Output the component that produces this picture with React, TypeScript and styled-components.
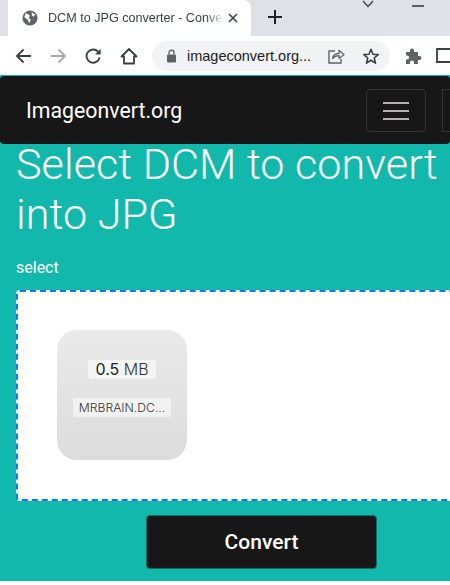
import React from 'react';
import styled, { createGlobalStyle } from 'styled-components';

const GlobalStyle = createGlobalStyle`
  html, body { margin: 0; padding: 0; background: #fff; }
  body { width: 450px; height: 585px; overflow: hidden; font-family: Roboto, "Liberation Sans", sans-serif; }
`;

const Page = styled.div`
  width: 450px;
  height: 585px;
  overflow: hidden;
  display: flex;
  flex-direction: column;
`;

const TabStrip = styled.div`
  height: 36px;
  flex: none;
  background: #dee1e6;
  display: flex;
  padding-left: 8px;
  position: relative;
`;

const Tab = styled.div`
  width: 243px;
  background: #fff;
  border-radius: 0 8px 0 0;
  display: flex;
  align-items: center;
  padding-left: 14px;
  box-sizing: border-box;
  gap: 10px;
  position: relative;
`;

const TabTitle = styled.div`
  font: 400 12.6px "Liberation Sans", Arial, sans-serif;
  color: #3c4043;
  white-space: nowrap;
  width: 176px;
  -webkit-mask-image: linear-gradient(to right, #000 90%, transparent);
  mask-image: linear-gradient(to right, #000 90%, transparent);
`;

const TabClose = styled.svg`
  position: absolute;
  right: 13px;
  top: 13px;
`;

const NewTab = styled.svg`
  margin: 10px 0 0 17px;
`;

const WindowButtons = styled.div`
  position: absolute;
  left: 362px;
  top: 0;
  display: flex;
  gap: 38px;
`;

const Toolbar = styled.div`
  height: 39px;
  flex: none;
  background: #fff;
  display: flex;
  align-items: center;
  padding-left: 15px;
  position: relative;
`;

const NavIcons = styled.div`
  display: flex;
  gap: 18px;
  align-items: center;
`;

const Omnibox = styled.div`
  margin-left: 14px;
  width: 238px;
  height: 30px;
  flex: none;
  border-radius: 15px;
  background: #f1f3f4;
  display: flex;
  align-items: center;
  padding-left: 14px;
  box-sizing: border-box;
  position: relative;
`;

const Url = styled.div`
  margin-left: 10px;
  font: 400 14.5px "Liberation Sans", Arial, sans-serif;
  color: #202124;
  white-space: nowrap;
`;

const OmniIcons = styled.div`
  position: absolute;
  right: 10px;
  top: 6px;
  display: flex;
  gap: 17px;
`;

const Extensions = styled.div`
  display: flex;
  gap: 14px;
  margin-left: 15px;
  flex: none;
`;

const Body = styled.div`
  flex: 1;
  background: #11b8ab;
  display: flex;
  flex-direction: column;
  min-height: 0;
`;

const Navbar = styled.div`
  height: 68px;
  flex: none;
  margin-top: 1px;
  background: #171717;
  border-radius: 4px;
  display: flex;
  align-items: center;
  padding-left: 26px;
  position: relative;
`;

const Brand = styled.div`
  color: #fff;
  font-size: 21.3px;
  font-weight: 400;
`;

const Toggler = styled.div`
  position: absolute;
  left: 366px;
  top: 13px;
  width: 60px;
  height: 43px;
  border: 1px solid #333;
  border-radius: 4px;
  box-sizing: border-box;
  display: flex;
  flex-direction: column;
  align-items: center;
  justify-content: center;
  gap: 6px;
`;

const TogglerLine = styled.span`
  display: block;
  width: 26px;
  height: 2px;
  background: #b5b1b1;
`;

const NavEdge = styled.div`
  position: absolute;
  left: 442px;
  top: 13px;
  width: 8px;
  height: 43px;
  border: 1px solid #333;
  border-right: none;
  box-sizing: border-box;
`;

const Heading = styled.h1`
  margin: -4px 0 0 16px;
  font-size: 43.2px;
  line-height: 50px;
  font-weight: 300;
  color: #fff;
  white-space: nowrap;
`;

const SelectLabel = styled.div`
  margin: 18px 0 0 16px;
  font-size: 16px;
  line-height: 20px;
  font-weight: 400;
  color: #fff;
`;

const DropZone = styled.div`
  margin: 12px 0 0 16px;
  width: 450px;
  height: 211px;
  flex: none;
  background: #fff;
  border: 2px dashed #0d7bf2;
  border-radius: 4px;
  box-sizing: border-box;
  padding: 38px 0 0 39px;
`;

const FileCard = styled.div`
  width: 130px;
  height: 130px;
  border-radius: 20px;
  background: linear-gradient(to bottom, #eaeaea, #dcdcdd);
  display: flex;
  flex-direction: column;
  align-items: center;
  padding-top: 30px;
  box-sizing: border-box;
`;

const FileSize = styled.div`
  background: rgba(255, 255, 255, 0.55);
  border-radius: 2px;
  padding: 0 7px;
  height: 19px;
  line-height: 19px;
  font-size: 16px;
  color: #333;
  font-family: Inter, Roboto, sans-serif;
  font-weight: 300;
  & strong { font-weight: 400; color: #222; }
`;

const FileName = styled.div`
  margin-top: 19px;
  background: rgba(255, 255, 255, 0.55);
  border-radius: 2px;
  padding: 0 6px;
  height: 19px;
  line-height: 19px;
  font-size: 12.2px;
  color: #333;
  font-family: Inter, Roboto, sans-serif;
  font-weight: 300;
  white-space: nowrap;
`;

const ConvertButton = styled.button`
  display: block;
  margin: 14px 0 0 146px;
  width: 231px;
  height: 54px;
  flex: none;
  background: #171717;
  color: #fff;
  border: 1px solid #0f6e66;
  border-radius: 4px;
  font: 500 21px Roboto, sans-serif;
  padding: 0;
`;

const BottomStrip = styled.div`
  height: 4px;
  flex: none;
  background: #fff;
`;

const Spacer = styled.div`
  flex: 1;
`;

export default function App() {
  return (
    <Page>
      <GlobalStyle />
      <TabStrip>
        <Tab>
          <svg width="16" height="16" viewBox="0 0 18 18">
            <circle cx="9" cy="9" r="8.5" fill="#5f6368" />
            <path d="M4.5 3.5 9 6.5 7.5 9 10 11 8 15 6.5 11 2.5 8zM11 2.5 15 5 13 7.5 11 6z" fill="#fff" />
          </svg>
          <TabTitle>DCM to JPG converter - Conve</TabTitle>
          <TabClose width="10" height="10" viewBox="0 0 10 10">
            <path d="M1 1 9 9M9 1 1 9" stroke="#3c4043" strokeWidth="1.6" />
          </TabClose>
        </Tab>
        <NewTab width="14" height="14" viewBox="0 0 14 14">
          <path d="M7 0V14M0 7H14" stroke="#202124" strokeWidth="2" />
        </NewTab>
        <WindowButtons>
          <svg width="12" height="8" viewBox="0 0 12 8">
            <path d="M1 1 6 6.5 11 1" fill="none" stroke="#3c4043" strokeWidth="1.3" />
          </svg>
          <svg width="12" height="8" viewBox="0 0 12 8">
            <path d="M0 6H12" stroke="#3c4043" strokeWidth="1.6" />
          </svg>
        </WindowButtons>
      </TabStrip>
      <Toolbar>
        <NavIcons>
          <svg width="17" height="16" viewBox="0 0 17 16">
            <path d="M16 8H2M8.5 1.5 2 8l6.5 6.5" fill="none" stroke="#3c4043" strokeWidth="1.9" />
          </svg>
          <svg width="17" height="16" viewBox="0 0 17 16">
            <path d="M1 8H15M8.5 1.5 15 8l-6.5 6.5" fill="none" stroke="#a9abae" strokeWidth="1.9" />
          </svg>
          <svg width="17" height="16" viewBox="0 0 17 16">
            <path d="M14.6 9.5A6.6 6.6 0 1 1 13 3.6" fill="none" stroke="#3c4043" strokeWidth="1.9" />
            <path d="M15.6 0.8V6.5H10z" fill="#3c4043" />
          </svg>
          <svg width="18" height="18" viewBox="0 0 18 18">
            <path d="M1.5 9.5 9 2l7.5 7.5H14v7H4v-7z" fill="none" stroke="#3c4043" strokeWidth="1.8" strokeLinejoin="round" />
          </svg>
        </NavIcons>
        <Omnibox>
          <svg width="11" height="14" viewBox="0 0 11 14">
            <rect x="1" y="5.5" width="9" height="8" rx="1" fill="#5f6368" />
            <path d="M3 5.5V3.8a2.5 2.5 0 0 1 5 0v1.7" fill="none" stroke="#5f6368" strokeWidth="1.4" />
          </svg>
          <Url>imageconvert.org...</Url>
          <OmniIcons>
            <svg width="18" height="18" viewBox="0 0 18 18">
              <path d="M8 4H2v12h12v-4" fill="none" stroke="#5f6368" strokeWidth="1.4" />
              <path d="M5.5 11.5c.6-3.4 3.4-5 6.5-5V3.5L17 7.5l-5 4V8.7c-2.5 0-4.9.8-6.5 2.8z" fill="none" stroke="#5f6368" strokeWidth="1.3" strokeLinejoin="round" />
            </svg>
            <svg width="18" height="18" viewBox="0 0 18 18">
              <path d="M9 2.3 11 7.2 16.2 7.6 12.2 11 13.5 16.1 9 13.3 4.5 16.1 5.8 11 1.8 7.6 7 7.2z" fill="none" stroke="#3c4043" strokeWidth="1.6" strokeLinejoin="round" />
            </svg>
          </OmniIcons>
        </Omnibox>
        <Extensions>
          <svg width="17" height="17" viewBox="0 0 17 17">
            <path d="M1 5h4V3.5a2 2 0 0 1 4 0V5h4v4h1.5a2 2 0 0 1 0 4H13v4H9v-1.5a2 2 0 0 0-4 0V17H1v-4.5h1a2 2 0 0 0 0-4H1z" fill="#5f6368" />
          </svg>
          <svg width="14" height="17" viewBox="0 0 14 17">
            <path d="M14 2H1v13h13" fill="none" stroke="#3c4043" strokeWidth="1.8" />
          </svg>
        </Extensions>
      </Toolbar>
      <Body>
        <Navbar>
          <Brand>Imageonvert.org</Brand>
          <Toggler>
            <TogglerLine />
            <TogglerLine />
            <TogglerLine />
          </Toggler>
          <NavEdge />
        </Navbar>
        <Heading>
          Select DCM to convert
          <br />
          into JPG
        </Heading>
        <SelectLabel>select</SelectLabel>
        <DropZone>
          <FileCard>
            <FileSize>
              <strong>0.5</strong> MB
            </FileSize>
            <FileName>MRBRAIN.DC...</FileName>
          </FileCard>
        </DropZone>
        <ConvertButton>Convert</ConvertButton>
        <Spacer />
      </Body>
      <BottomStrip />
    </Page>
  );
}
